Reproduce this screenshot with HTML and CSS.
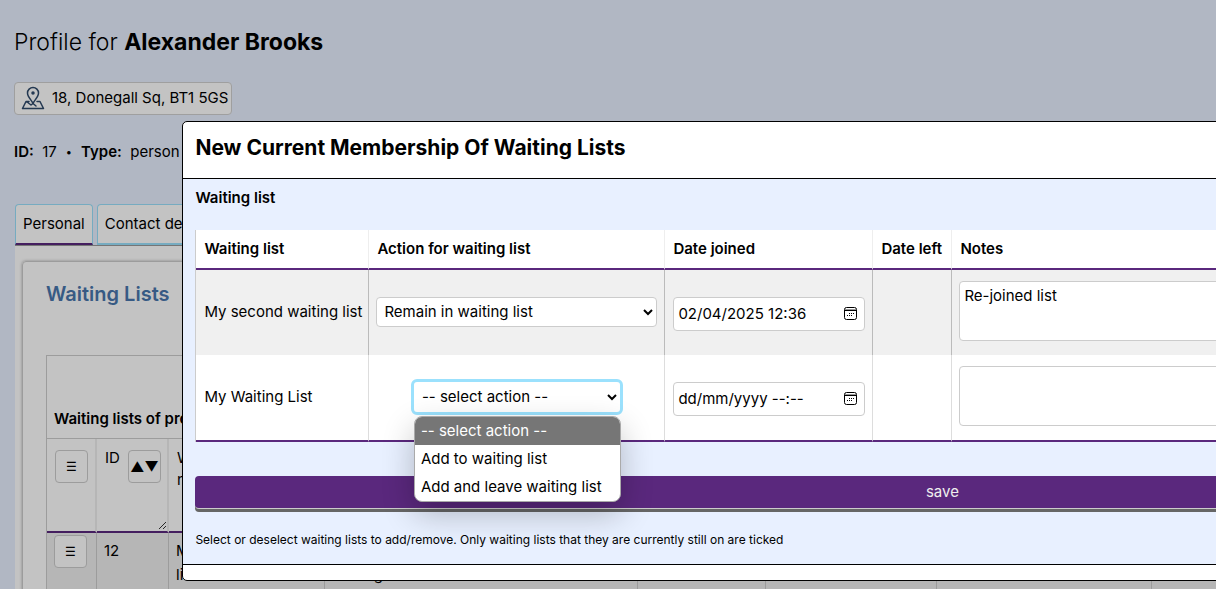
FILE: index.html
```html
<!DOCTYPE html>
<html lang="en">
<head>
<meta charset="utf-8">
<title>Profile for Alexander Brooks</title>
<link rel="stylesheet" href="styles.css">
</head>
<body>
<main class="page">
  <h1 class="page-title">Profile for <strong>Alexander Brooks</strong></h1>
  <button class="address" type="button">
    <svg class="address-icon" viewBox="0 0 24 24" fill="none" stroke="#2f4a6b" stroke-width="1.500" stroke-linejoin="round" stroke-linecap="round" aria-hidden="true">
      <path d="M12 17.500C10.500 14 6.500 11 6.500 7a5.500 5.500 0 0 1 11 0c0 4-4 7-5.500 10.500z"/>
      <circle cx="12" cy="7" r="1" fill="#2f4a6b"/>
      <path d="M8 15.500H5L1.500 22.500h21L19 15.500h-3M5.500 15.500l4.500 3.500 2-1.500 3 2.500"/>
    </svg>
    18, Donegall Sq, BT1 5GS
  </button>
  <p class="meta"><span><b>ID:</b>&nbsp; 17</span><span class="dot">•</span><span><b>Type:</b>&nbsp; person</span></p>
  <nav class="tabs">
    <a class="tab tab-active" href="#personal">Personal</a>
    <a class="tab" href="#contact">Contact details</a>
  </nav>
  <div class="panel">
    <section class="card">
      <h2 class="card-title">Waiting Lists</h2>
      <table class="lists">
        <caption class="lists-caption">Waiting lists of profile</caption>
        <colgroup><col class="l-menu"><col class="l-id"><col class="l-name"><col class="l-action"><col class="l-date"><col class="l-left"><col class="l-notes"><col></colgroup>
        <thead>
          <tr>
            <th><button class="square" type="button" aria-label="Columns">☰</button></th>
            <th class="resizable"><div class="sort-head">ID <button class="square square-sort" type="button" aria-label="Sort">▲▼</button></div>
              <svg class="grip" viewBox="0 0 9 9" stroke="#333" stroke-width="1" aria-hidden="true"><path d="M1 8L8 1M5 8l3-3"/></svg></th>
            <th>Waiting list<br>name</th><th></th><th></th><th></th><th></th><th></th>
          </tr>
        </thead>
        <tbody>
          <tr>
            <td><button class="square" type="button" aria-label="Row menu">☰</button></td>
            <td>12</td><td>My second<br>list</td><td>Remain in<br>waiting list</td><td></td><td></td><td></td><td></td>
          </tr>
        </tbody>
      </table>
    </section>
  </div>
</main>
<div class="backdrop"></div>
<div class="dialog" role="dialog" aria-labelledby="dialog-title">
  <header class="dialog-head"><h2 class="dialog-title" id="dialog-title">New Current Membership Of Waiting Lists</h2></header>
  <form class="dialog-body">
    <h3 class="group-title">Waiting list</h3>
    <table class="entries">
      <colgroup><col class="e-list"><col class="e-action"><col class="e-joined"><col class="e-left"><col></colgroup>
      <thead>
        <tr><th>Waiting list</th><th>Action for waiting list</th><th>Date joined</th><th>Date left</th><th>Notes</th></tr>
      </thead>
      <tbody>
        <tr class="shaded">
          <td>My second waiting list</td>
          <td><select class="field select-wide" aria-label="Action for My second waiting list"><option>Remain in waiting list</option></select></td>
          <td><div class="date field"><input class="date-input" type="text" aria-label="Date joined My second waiting list" value="02/04/2025 12:36"><button class="date-button" type="button" aria-label="Pick a date"><svg class="date-icon" viewBox="0 0 15 15" fill="none" stroke="#000" aria-hidden="true"><rect x="1.500" y="1.500" width="12" height="12" rx="2"/><path d="M2 3.500h11" stroke="#999"/><path d="M2 4.500h11"/><path d="M6 7.500h1M8 7.500h1M10 7.500h1M4 9.500h1M6 9.500h1M8 9.500h1"/></svg></button></div></td>
          <td></td>
          <td><textarea class="field notes" aria-label="Notes for My second waiting list">Re-joined list</textarea></td>
        </tr>
        <tr>
          <td>My Waiting List</td>
          <td>
            <div class="dropdown">
              <select class="field select-focus" aria-label="Action for My Waiting List"><option>-- select action --</option><option>Add to waiting list</option><option>Add and leave waiting list</option></select>
              <ul class="menu" role="listbox">
                <li class="menu-item menu-item-active" role="option">-- select action --</li>
                <li class="menu-item" role="option">Add to waiting list</li>
                <li class="menu-item" role="option">Add and leave waiting list</li>
              </ul>
            </div>
          </td>
          <td><div class="date field"><input class="date-input" type="text" aria-label="Date joined My Waiting List" value="dd/mm/yyyy --:--"><button class="date-button" type="button" aria-label="Pick a date"><svg class="date-icon" viewBox="0 0 15 15" fill="none" stroke="#000" aria-hidden="true"><rect x="1.500" y="1.500" width="12" height="12" rx="2"/><path d="M2 3.500h11" stroke="#999"/><path d="M2 4.500h11"/><path d="M6 7.500h1M8 7.500h1M10 7.500h1M4 9.500h1M6 9.500h1M8 9.500h1"/></svg></button></div></td>
          <td></td>
          <td><textarea class="field notes" aria-label="Notes for My Waiting List"></textarea></td>
        </tr>
      </tbody>
    </table>
    <button class="save" type="button">save</button>
    <p class="hint">Select or deselect waiting lists to add/remove. Only waiting lists that they are currently still on are ticked</p>
  </form>
  <footer class="dialog-foot"></footer>
</div>
</body>
</html>
```
FILE: styles.css
```css
* { box-sizing: border-box; }
html { height: 100%; overflow: hidden; }
body {
  margin: 0;
  height: 100%;
  overflow: hidden;
  background: #e8f0ff;
  color: #000;
  font: 15px/22px Inter, "Liberation Sans", sans-serif;
}
button, input, select, textarea { font: inherit; color: inherit; }
h1, h2, h3, p, ul { margin: 0; padding: 0; }

/* Profile page */
.page { height: 100%; padding: 27px 0 0 14px; overflow: hidden; }
.page-title { font-size: 23px; line-height: 30px; font-weight: 300; }
.page-title strong { font-weight: 700; }
.address {
  display: flex;
  align-items: center;
  gap: 7px;
  height: 33px;
  margin-top: 25px;
  padding: 0 3px 1px 6px;
  border: 1px solid #d0d0d0;
  border-radius: 4px;
  background: #fff;
  white-space: nowrap;
}
.address-icon { width: 24px; height: 24px; }
.meta { display: flex; gap: 9px; margin-top: 26px; }
.meta b { font-weight: 600; }
.dot { font-size: 11px; }
.tabs { display: flex; gap: 4px; margin: 41px 0 0 1px; }
.tab {
  height: 41px;
  padding: 8px 7px;
  border: 1px solid #9be0fb;
  border-bottom-width: 2px;
  border-radius: 4px 4px 0 0;
  background: #fff;
  color: #000;
  text-decoration: none;
}
.tab-active { border-bottom-color: #5a287d; }
.panel { margin-left: 1px; padding: 15px 7px; border-top: 1px solid #999; background: #fff; }
.card { height: 500px; padding: 19px 23px; border: 1px solid #ccc; border-radius: 4px; box-shadow: 0 0 3px #aaa; }
.card-title { color: #4976ad; font-size: 20px; line-height: 26px; font-weight: 600; }
.lists {
  width: 130%;
  margin-top: 48px;
  border: 1px solid #ccc;
  border-width: 1px 0 0 1px;
  border-spacing: 0;
  table-layout: fixed;
}
.lists-caption {
  padding: 52px 0 8px 7px;
  border: 1px solid #ccc;
  border-bottom: 0;
  text-align: left;
  font-weight: 600;
}
.lists th { height: 94px; padding: 8px; border-right: 2px solid #eee; border-bottom: 2px solid #5a287d; text-align: left; vertical-align: top; font-weight: 400; }
.lists td { padding: 6px 7px 4px; height: 60px; border-right: 1px solid #ccc; background: #eee; vertical-align: top; line-height: 24px; }
.lists td:first-child { padding-top: 2px; }
.l-menu { width: 50px; }
.l-id { width: 72px; }
.l-name { width: 156px; }
.l-action { width: 313px; }
.l-date { width: 128px; }
.l-left { width: 171px; }
.l-notes { width: 215px; }
.square { width: 33px; height: 33px; margin-top: 3px; padding: 0; border: 1px solid #ccc; border-radius: 4px; background: #fff; font-size: 12px; line-height: 31px; }
.lists td .square { margin-top: 0; }
.square-sort { font-size: 14px; }
.sort-head { display: flex; justify-content: space-between; width: 56px; }
.resizable { position: relative; }
.grip { position: absolute; right: 0; bottom: 1px; width: 9px; height: 9px; }

.backdrop { position: fixed; inset: 0; background: rgba(0, 0, 0, .235); }

/* Dialog */
.dialog {
  position: fixed;
  top: 121px;
  left: 15vw;
  width: 125vw;
  border: 1px solid #000;
  border-radius: 5px;
  background: #fff;
}
.dialog-head { padding: 12px 12px 16px; border-bottom: 1px solid #000; }
.dialog-title { font-size: 21px; line-height: 28px; font-weight: 700; }
.dialog-body { display: flex; flex-direction: column; padding: 8px 12px 13px; border-bottom: 1px solid #000; background: #e8f0ff; }
.group-title { font-size: 15px; line-height: 22px; font-weight: 600; }
.entries { width: 100%; margin-top: 21px; border-left: 1px solid #ccc; border-spacing: 0; table-layout: fixed; background: #fff; }
.e-list { width: 173px; }
.e-action { width: 296px; }
.e-joined { width: 208px; }
.e-left { width: 79px; }
.entries th { height: 40px; padding: 0 8px; border-right: 1px solid #eee; border-bottom: 2px solid #5a287d; text-align: left; font-weight: 600; white-space: nowrap; }
.entries td { height: 85px; padding: 0 7px 2px; border-right: 1px solid #ddd; white-space: nowrap; }
.entries td:first-child { padding-left: 8px; }
.entries .shaded td { border-right-color: #bbb; background: #f0f0f0; }
.entries tr:last-child td { height: 87px; border-bottom: 2px solid #5a287d; }
.field { border: 1px solid #ccc; border-radius: 4px; background: #fff; }
.select-wide { display: block; width: 100%; height: 30px; padding: 0 3px; }
.dropdown { position: relative; width: 212px; margin: 0 auto; }
.select-focus { display: block; width: 212px; height: 36px; padding: 0 4px; border: 3px solid #9be1fd; border-radius: 6px; outline: 0; }
.menu {
  position: absolute;
  top: 37px;
  left: 3px;
  z-index: 1;
  width: 207px;
  overflow: hidden;
  border: 1px solid #aaa;
  border-radius: 8px;
  background: #fff;
  box-shadow: 0 12px 32px rgba(0, 0, 0, .24);
  list-style: none;
}
.menu-item { padding: 0 6px; line-height: 28px; }
.menu-item-active { background: #767676; color: #fff; }
.date { display: flex; align-items: center; width: 192px; height: 34px; margin: 4px 0 0 1px; padding: 0 6px 0 4px; }
.date-input { flex: 1; min-width: 0; padding: 0; border: 0; outline: 0; background: none; }
.date-button { display: flex; padding: 0; border: 0; background: none; }
.date-icon { width: 15px; height: 15px; }
.notes { display: block; width: 100%; height: 60px; margin-bottom: 1px; padding: 3px 4px; resize: none; }
.save { height: 33px; margin-top: 34px; border: 0; border-bottom: 1px solid #ccc; border-radius: 4px; background: #5a287d; box-shadow: 0 3px #666; color: #eee; }
.hint { margin-top: 20px; font-size: 12px; line-height: 22px; }
.dialog-foot { height: 15px; }
```
